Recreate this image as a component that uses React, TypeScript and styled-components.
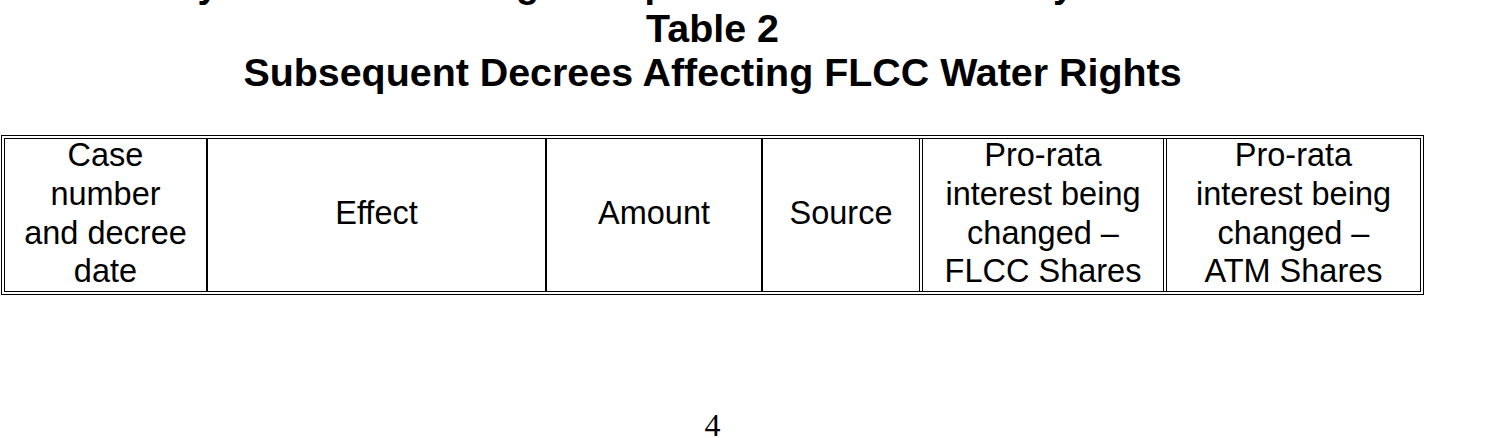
import React from 'react'
import styled, { createGlobalStyle } from 'styled-components'

const GlobalStyle = createGlobalStyle`
  html, body {
    margin: 0;
    padding: 0;
    background: #fff;
  }
  body {
    font-family: "Liberation Sans", Arial, sans-serif;
    color: #000;
  }
`

type Column = {
  width: number
  double?: boolean
  last?: boolean
  lines: string[]
}

const columns: Column[] = [
  { width: 203, lines: ['Case', 'number', 'and decree', 'date'] },
  { width: 339, lines: ['Effect'] },
  { width: 216, lines: ['Amount'] },
  { width: 160, double: true, lines: ['Source'] },
  { width: 244, double: true, lines: ['Pro-rata', 'interest being', 'changed \u2013', 'FLCC Shares'] },
  { width: 253, last: true, lines: ['Pro-rata', 'interest being', 'changed \u2013', 'ATM Shares'] },
]

const App = () => {
  return (
    <Page>
      <GlobalStyle />
      <TitleBlock>
        <TitleLine $size={37.9}>Summary of Orders Adding to Capital Shares Held Solely in the ATM Ditch</TitleLine>
        <TitleLine>Table 2</TitleLine>
        <TitleLine>Subsequent Decrees Affecting FLCC Water Rights</TitleLine>
      </TitleBlock>
      <Table>
        <thead>
          <tr>
            {columns.map((col, i) => (
              <HeadCell key={i} $width={col.width} $double={col.double} $last={col.last}>
                <CellText>
                  {col.lines.map((line, j) => (
                    <div key={j}>{line}</div>
                  ))}
                </CellText>
              </HeadCell>
            ))}
          </tr>
        </thead>
      </Table>
      <PageNumber>4</PageNumber>
    </Page>
  )
}

export default App

const Page = styled.div`
  display: flow-root;
  width: 1423px;
  padding-left: 1px;
`
const TitleBlock = styled.div`
  margin-top: -36.7px;
  text-align: center;
  font-weight: bold;
  line-height: 43.6px;
`
const TitleLine = styled.div<{ $size?: number }>`
  font-size: ${p => p.$size ?? 39.4}px;
  white-space: nowrap;
`
const Table = styled.table`
  box-sizing: border-box;
  width: 1423px;
  margin-top: 41.4px;
  border: 4px double #000;
  border-collapse: separate;
  border-spacing: 0;
  table-layout: fixed;
`
const HeadCell = styled.th<{ $width: number; $double?: boolean; $last?: boolean }>`
  box-sizing: border-box;
  width: ${p => p.$width}px;
  padding: 0;
  font-weight: normal;
  font-size: 32.5px;
  line-height: 38.67px;
  text-align: center;
  vertical-align: middle;
  border-right: ${p => (p.$last ? 'none' : p.$double ? '4px double #000' : '2px solid #000')};
`
const CellText = styled.div`
  margin: -3.1px 0 -0.1px;
  white-space: nowrap;
`
const PageNumber = styled.div`
  margin-top: 117px;
  text-align: center;
  font-family: "Liberation Serif", "Times New Roman", serif;
  font-size: 32px;
  line-height: 26px;
`
